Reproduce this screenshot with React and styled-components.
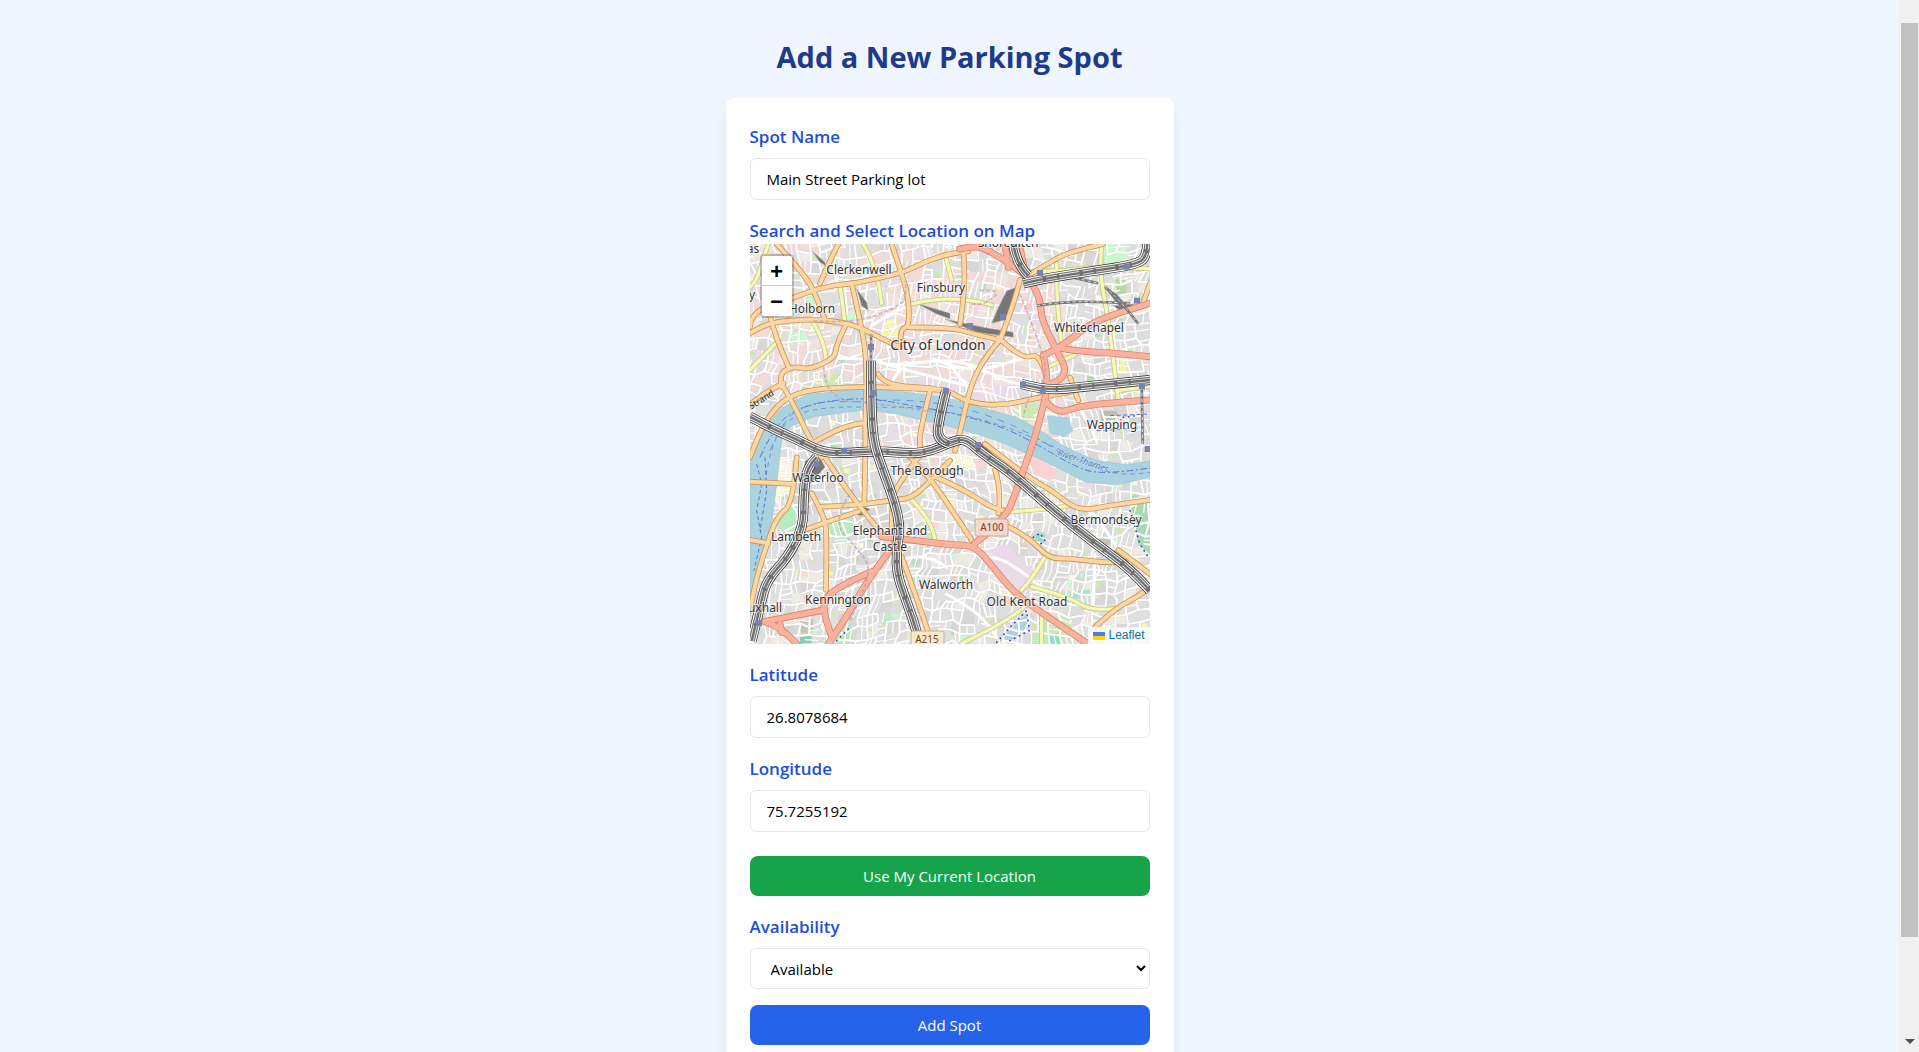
import React, { useState } from "react";
import styled, { createGlobalStyle } from "styled-components";

const UI_FONT = '"Open Sans", "Noto Sans", sans-serif';
const MAP_FONT = '"Noto Sans", "Open Sans", sans-serif';

const GlobalStyle = createGlobalStyle`
  *, *::before, *::after { box-sizing: border-box; }
  body {
    margin: 0;
    overflow: hidden;
    background: #eff6ff;
    font-family: ${UI_FONT};
    font-size: 15px;
    line-height: 24px;
    color: #000;
  }
`;

const Shell = styled.div`
  display: flex;
  height: 100vh;
`;

const Page = styled.main`
  flex: 1;
  min-width: 0;
  overflow: hidden;
  display: flex;
  flex-direction: column;
  align-items: center;
  padding: 38px 16px 0;
`;

const Title = styled.h1`
  margin: 0 0 22px;
  font-size: 29px;
  line-height: 38px;
  font-weight: 700;
  color: #1e3a8a;
`;

const Card = styled.form`
  width: 100%;
  max-width: 448px;
  flex-shrink: 0;
  padding: 24px;
  display: flex;
  flex-direction: column;
  gap: 16px;
  background: #fff;
  border-radius: 8px;
  box-shadow: 0 10px 15px -3px rgba(0, 0, 0, 0.1), 0 4px 6px -4px rgba(0, 0, 0, 0.1);
`;

const Field = styled.div`
  display: flex;
  flex-direction: column;
  gap: ${(p) => (p.$tight ? "0" : "8px")};
`;

const Label = styled.label`
  padding-top: 2px;
  font-size: 17px;
  line-height: 26px;
  font-weight: 600;
  color: #1d4ed8;
`;

const TextInput = styled.input`
  width: 100%;
  height: 42px;
  padding: 8px 16px;
  border: 1px solid #e5e7eb;
  border-radius: 6px;
  background: #fff;
  font: inherit;
  color: #000;
  outline: none;
`;

const Select = styled.select`
  width: 100%;
  height: 41px;
  padding: 8px 16px;
  border: 1px solid #e5e7eb;
  border-radius: 6px;
  background: #fff;
  font: inherit;
  color: #000;
`;

const Button = styled.button`
  width: 100%;
  height: 40px;
  margin-top: ${(p) => (p.$spaced ? "8px" : "0")};
  border: 0;
  border-radius: 8px;
  background: ${(p) => p.$color};
  color: #fff;
  font: inherit;
  cursor: pointer;
`;

/* ---------- scroll bar ---------- */

const ScrollTrack = styled.div`
  width: 20px;
  padding: 23px 1px 8px 2px;
  display: flex;
  flex-direction: column;
  justify-content: space-between;
  align-items: center;
  background: #f0f0f0;
`;

const ScrollThumb = styled.div`
  width: 100%;
  height: 89.5%;
  background: #c1c1c1;
`;

const ScrollArrow = styled.div`
  border-left: 5px solid transparent;
  border-right: 5px solid transparent;
  border-top: 5px solid #505050;
`;

/* ---------- map ---------- */

const MapBox = styled.div`
  position: relative;
  width: 100%;
  height: 400px;
  overflow: hidden;
  background: #ddd;
`;

const MapDrawing = styled.svg`
  display: block;
  width: 100%;
  height: 100%;
`;

const ZoomBar = styled.div`
  position: absolute;
  top: 10px;
  left: 10px;
  display: flex;
  flex-direction: column;
  border: 2px solid rgba(0, 0, 0, 0.2);
  border-radius: 4px;
  background-clip: padding-box;
`;

const ZoomButton = styled.button`
  width: 30px;
  height: 30px;
  padding: 5px 0 0;
  border: 0;
  border-bottom: ${(p) => (p.$first ? "1px solid #ccc" : "0")};
  border-radius: ${(p) => (p.$first ? "2px 2px 0 0" : "0 0 2px 2px")};
  background: #fff;
  color: #000;
  font: bold 22px/25px "Liberation Mono", monospace;
  cursor: pointer;
`;

const Attribution = styled.div`
  position: absolute;
  right: 0;
  bottom: 0;
  padding: 0 5px;
  background: rgba(255, 255, 255, 0.8);
  font: 12px/17px "Liberation Sans", sans-serif;
`;

const AttributionLink = styled.a`
  display: flex;
  align-items: center;
  gap: 3px;
  color: #0078a8;
  text-decoration: none;
`;

/* Line work lives in a 1200 x 1200 space, three units to a map pixel. */
function randomSource(seed) {
  let s = seed;
  return () => {
    s = (s * 1664525 + 1013904223) % 4294967296;
    return s / 4294967296;
  };
}

function buildStreets() {
  const rnd = randomSource(77);
  const step = 33;
  const n = Math.ceil(1200 / step) + 3;
  const pts = [];
  for (let j = 0; j < n; j++) {
    pts.push([]);
    for (let i = 0; i < n; i++) {
      const x = (i - 1) * step;
      const y = (j - 1) * step;
      pts[j].push([
        Math.round(x + 26 * Math.sin(y / 130 + x / 400) + (rnd() - 0.5) * 18),
        Math.round(y + 26 * Math.sin(x / 150 + 1) + (rnd() - 0.5) * 18),
      ]);
    }
  }
  let streets = "";
  let alleys = "";
  const cells = [];
  const center = ["#f2dad9", "#f2dad9", "#ebdbe8", "#e0dfdf", "#f2dad9", "#f0e4de"];
  const outer = ["#dddddd", "#dddddd", "#e0dfdf", "#e0dfdf", "#d9d6d6", "#eeeae4"];
  const accents = ["#cdebb0", "#c8facc", "#ffffe5", "#fbf6b0", "#f2dad9", "#aee0a8", "#ffd6d1", "#cdebb0"];
  for (let j = 0; j < n - 1; j++) {
    for (let i = 0; i < n - 1; i++) {
      const a = pts[j][i];
      const b = pts[j][i + 1];
      const c = pts[j + 1][i + 1];
      const d = pts[j + 1][i];
      const inCity = a[0] > 330 && a[0] < 920 && a[1] > 60 && a[1] < 640;
      const northWest = a[0] < 500 && a[1] < 450;
      const list = inCity || (northWest && rnd() < 0.6) ? center : outer;
      cells.push([`${a} ${b} ${c} ${d}`, list[Math.floor(rnd() * list.length)]]);
      if (rnd() < 0.32) {
        const w = 9 + rnd() * 18;
        const h = 8 + rnd() * 15;
        cells.push([
          `${a[0] + 4},${a[1] + 4} ${a[0] + w},${a[1] + 7} ${a[0] + w - 3},${a[1] + h} ${a[0] + 2},${a[1] + h - 2}`,
          accents[Math.floor(rnd() * accents.length)],
        ]);
      }
      if (rnd() < 0.74) streets += `M${a}L${b}`;
      if (rnd() < 0.74) streets += `M${a}L${d}`;
      if (rnd() < 0.32) {
        alleys += `M${(a[0] + b[0]) >> 1},${(a[1] + b[1]) >> 1}L${(c[0] + d[0]) >> 1},${(c[1] + d[1]) >> 1}`;
      } else if (rnd() < 0.25) {
        alleys += `M${(a[0] + d[0]) >> 1},${(a[1] + d[1]) >> 1}L${(c[0] + b[0]) >> 1},${(c[1] + b[1]) >> 1}`;
      }
    }
  }
  return { streets, alleys, cells };
}

const TOWN = buildStreets();

/* Rounds a list of points into a path with curved corners. */
function curve(points) {
  const p = points.split(" ").map((s) => s.split(",").map(Number));
  if (p.length < 3) return `M${p[0]}L${p[1]}`;
  let d = `M${p[0]}`;
  for (let i = 1; i < p.length - 1; i++) {
    const last = i === p.length - 2;
    const end = last ? p[i + 1] : [(p[i][0] + p[i + 1][0]) / 2, (p[i][1] + p[i + 1][1]) / 2];
    d += `Q${p[i]} ${end}`;
  }
  return d;
}

const RIVER =
  "M0,640L25,588L60,530L100,490L170,452L320,436L430,440L590,462L690,490L800,520L880,565L930,600L980,625L1040,650L1130,662L1200,650V700L1100,723L1010,715L930,675L880,650L800,615L740,590L680,570L590,545L430,508L340,498L190,518L120,548L95,588L80,720L58,890L12,1050L0,1080Z";

const PARKS = [
  ["110,270 165,255 175,290 120,305", "#c8facc"],
  ["160,155 195,150 195,195 165,200", "#c8facc"],
  ["220,395 275,388 278,420 225,425", "#cdebb0"],
  ["235,830 300,820 315,860 290,890 240,880", "#b5ecc0"],
  ["85,830 125,785 155,800 150,860 90,860", "#b5ecc0"],
  ["60,640 125,640 125,740 95,760 85,790 70,760", "#fdfbdc"],
  ["405,230 440,222 445,280 400,275", "#fbf6a0"],
  ["1060,0 1130,0 1130,55 1065,60", "#c8facc"],
  ["800,490 860,475 870,520 830,535 795,525", "#cdebb0"],
  ["815,170 848,168 850,198 815,200", "#ffc9c4"],
  ["1095,105 1125,100 1130,150 1100,150", "#b5d9a0"],
  ["1110,340 1130,340 1130,390 1110,390", "#f5f3a8"],
  ["1140,780 1200,770 1200,930 1165,900", "#a8d9b0"],
  ["150,1130 190,1125 190,1165 155,1170", "#c8c5ae"],
  ["150,1180 185,1175 185,1200 150,1200", "#83cfae"],
  ["270,1160 300,1140 315,1170 285,1200 255,1200", "#b5ecb0"],
  ["395,1115 420,1105 430,1135 400,1145", "#b5f0c8"],
  ["740,1195 830,1110 840,1150 790,1185", "#aad3df"],
  ["850,1140 950,1110 965,1150 940,1200 850,1200", "#c4ecb4"],
  ["900,1170 930,1165 930,1200 900,1200", "#8fe3bb"],
  ["855,870 885,868 882,900 860,898", "#9fd9c8"],
  ["1030,880 1090,875 1095,905 1040,900", "#c8c5b0"],
  ["960,1045 1020,1035 1020,1055 965,1065", "#9fe8c8"],
  ["585,640 660,630 680,670 620,690", "#fdfbd0"],
  ["1050,500 1100,500 1105,525 1055,530", "#bcbcab"],
  ["980,70 1010,65 1015,100 985,105", "#d9edc0"],
  ["620,90 650,88 650,110 620,110", "#a8f0c0"],
];

/* Large sites that no minor street runs through. */
const BLOCKS = [
  ["740,905 765,900 865,1000 850,1028 815,1045 705,945", "#ebdbe8"],
  ["832,625 870,618 925,690 900,712 850,690", "#f9d3d3"],
  ["890,515 955,520 970,560 945,578 900,570", "#aad3df"],
  ["1000,700 1030,705 1035,735 1000,735", "#ebdbe8"],
];

const ROADS = {
  yellow: [
    "270,128 280,190 285,238",
    "340,0 385,78 395,178",
    "185,228 225,290 228,348",
    "475,183 600,148 725,183",
    "55,0 35,60 20,110 0,130",
    "0,378 85,290",
    "920,58 918,178 935,300",
    "1055,0 1048,88 1075,218 1105,468",
    "830,82 925,83 1055,66 1200,75",
    "895,368 975,333",
    "1100,440 1200,428",
    "585,30 605,108",
    "485,768 555,838 555,900",
    "755,803 855,803 965,783",
    "885,938 845,1008 815,1038",
    "845,1028 955,1058 1025,1103 1105,1093",
    "635,1198 785,1128 835,1078",
    "875,1108 875,1200",
  ],
  orange: [
    "80,0 165,93 200,158 225,228",
    "265,0 235,58 210,118",
    "125,163 215,128 315,118 455,88 525,53 600,28 655,22",
    "0,268 45,238 135,228 205,226 305,240 355,263 415,293 450,310",
    "60,215 75,278 115,368",
    "305,118 330,228 347,318 350,438 345,538 347,620 343,778",
    "0,250 0,190 120,165",
    "95,428 85,388 135,366 175,378 255,343 260,298 285,248",
    "0,483 45,443 100,418",
    "0,640 25,575 55,518 105,463 185,435 345,428 405,430 585,438",
    "100,428 135,488 180,588 215,640",
    "425,0 455,88 475,158 478,248 450,255 452,300",
    "475,250 600,250 665,268 750,288",
    "385,390 400,425 585,433 650,475 755,486 875,458 965,443",
    "540,440 520,520 505,600 515,628",
    "750,288 705,338 660,428 630,568 615,620",
    "810,108 790,188 750,288",
    "640,23 650,118 630,240",
    "845,88 925,38 985,18 1060,0",
    "745,280 815,348 870,325 890,400",
    "960,400 985,470",
    "1200,118 1180,175",
    "0,713 130,720",
    "0,888 55,898",
    "140,640 130,778 80,818 45,918 15,1018 0,1100",
    "165,858 245,828 325,803",
    "215,788 335,783 425,768 485,763 545,708 600,650",
    "185,748 225,818 230,888 228,1038",
    "225,640 315,778 405,878",
    "185,600 285,538 345,538",
    "515,628 445,718 425,768 425,868",
    "455,938 535,1158 545,1200",
    "470,628 545,708 600,790 665,888",
    "560,700 645,738 735,798 765,800",
    "735,678 755,738 745,808",
    "705,600 845,708 905,738 965,788 1015,798 1085,783 1200,768",
    "775,848 835,878 895,943 955,943 1085,958 1125,953",
    "1200,1030 1165,1058 1095,1093 1035,1150",
    "1105,918 1200,990",
  ],
  red: [
    "630,15 675,5 715,18 825,88 870,158 875,228 915,308 962,405 885,425",
    "765,0 775,70",
    "808,0 825,85",
    "880,335 935,308 1015,243 1085,213 1200,178",
    "925,312 985,323 1105,328 1200,338",
    "880,333 895,408 885,468 855,580 830,650 800,738 765,828 675,898",
    "885,468 915,510 985,488 1065,478 1200,468",
    "395,878 485,888 600,903 665,903 705,938 775,1028 845,1088 1015,1200",
    "435,900 365,988 285,1128 235,1200",
    "365,983 295,1013 225,1058 220,1108 245,1178",
    "45,1133 115,1118 222,1098",
    "45,1133 95,1148 140,1200",
    "90,1140 95,1165",
  ],
};

const ROAD_LOOKS = {
  yellow: { edge: "#c5c98a", fill: "#f5f8b6", width: 15 },
  orange: { edge: "#c9964f", fill: "#fcd6a4", width: 17 },
  red: { edge: "#e0806a", fill: "#f9b29c", width: 21 },
};

const MAIN_STREETS = [
  "265,343 355,343 440,370 590,410 650,425",
  "430,365 600,340 700,380 790,350 870,330",
  "600,360 640,420 660,430",
  "550,345 625,375 690,370 790,425 860,420",
  "450,380 405,425 455,430",
  "590,1050 640,1080 700,1120 740,1180",
  "720,940 770,940 880,1035",
  "980,480 1020,540 1040,590",
  "1015,790 1080,870 1130,960",
  "365,245 440,195 470,190",
  "440,950 530,920 590,970",
  "1035,930 1030,1080",
];

const RAILS = [
  "0,518 75,558 145,588 215,625 285,628 385,620 485,630 545,620 600,595 645,583 695,628 785,688 915,803 1035,898 1145,978 1200,1040",
  "200,640 170,668 160,758 160,848 115,938 50,1008 30,1088 5,1190",
  "363,350 363,438 368,588 395,668 435,778 450,848 440,918 440,988 475,1088 500,1158 508,1200",
  "588,440 568,520 560,590 600,600",
  "815,420 885,440 1005,428 1200,408",
  "820,118 875,105 1035,80 1155,62 1190,40 1192,0",
  "790,0 800,63 835,95",
];

const YARDS = [
  "770,140 800,130 790,175 775,225 725,238 745,190",
  "185,20 220,50 235,70 210,55",
  "320,135 350,175 355,200 335,185",
  "500,178 600,208 600,225 560,210",
  "585,225 700,250 790,265 790,280 680,265",
  "310,810 345,790 360,795 335,815",
  "655,590 700,600 760,665 720,665",
  "165,650 210,640 225,670 180,720 160,740",
  "1060,125 1100,150 1130,185 1110,190",
  "1090,185 1150,180 1165,200 1110,200",
];

const SIDINGS = [
  "860,185 920,175 1045,172 1140,178",
  "925,90 1045,118",
  "1065,128 1120,178 1165,240",
  "1175,410 1178,600",
  "363,270 363,350",
];
const TUBES = [
  "190,230 310,240 455,185 470,150 465,110",
  "222,370 222,465 400,480 590,510",
  "310,735 240,830 330,920 370,990 300,1130",
  "665,180 700,185 760,135 690,140",
  "810,150 870,300 895,400 830,460 820,520",
];
const STATIONS = [
  [363, 309], [370, 447], [588, 441], [200, 660], [282, 621], [870, 87], [1131, 68], [1161, 170],
  [759, 219], [660, 246], [819, 422], [878, 440], [1176, 426], [684, 603], [1193, 615], [27, 1137],
];

const PLACES = [
  ["Clerkenwell", 109, 30, 12],
  ["Finsbury", 191, 48, 12],
  ["Holborn", 62, 69, 12],
  ["City of London", 188, 106, 14],
  ["Whitechapel", 339, 88, 12],
  ["Wapping", 362, 185, 12],
  ["Waterloo", 68, 238, 12],
  ["The Borough", 177, 231, 12],
  ["Elephant and", 140, 291, 12],
  ["Castle", 140, 307, 12],
  ["Lambeth", 46, 297, 12],
  ["Kennington", 88, 360, 12],
  ["uxhall", 15, 368, 12],
  ["Walworth", 196, 345, 12],
  ["Old Kent Road", 277, 362, 12],
  ["Bermondsey", 356, 280, 12],
  ["Shoreditch", 258, 3, 12],
  ["as", 3, 9, 12],
  ["y", 2, 55, 12],
];

const PlaceName = styled.text`
  font-family: ${MAP_FONT};
  font-size: ${(p) => p.$size}px;
  text-anchor: middle;
  fill: #333;
  stroke: rgba(255, 255, 255, 0.6);
  stroke-width: 2px;
  stroke-linejoin: round;
  paint-order: stroke;
`;

const StreetName = styled.text`
  font-family: ${MAP_FONT};
  font-size: 9px;
  text-anchor: middle;
  fill: #222;
`;

const WaterName = styled.text`
  font-family: ${MAP_FONT};
  font-size: 9px;
  font-style: italic;
  fill: #4f78bd;
  stroke: #cfe3ea;
  stroke-width: 1px;
  paint-order: stroke;
`;

const ShieldText = styled.text`
  font-family: ${MAP_FONT};
  font-size: 10px;
  text-anchor: middle;
  fill: ${(p) => p.$color};
`;

function Roads({ kind }) {
  const look = ROAD_LOOKS[kind];
  return (
    <g fill="none" strokeLinecap="round" strokeLinejoin="round">
      {ROADS[kind].map((r) => (
        <path key={r} d={curve(r)} stroke={look.edge} strokeWidth={look.width} />
      ))}
      {ROADS[kind].map((r) => (
        <path key={r} d={curve(r)} stroke={look.fill} strokeWidth={look.width - 5} />
      ))}
    </g>
  );
}

function Rail({ points }) {
  const d = curve(points);
  return (
    <>
      <path d={d} stroke="#222" strokeWidth="30" />
      <path d={d} stroke="#fff" strokeWidth="26" />
      <path d={d} stroke="#6f6f6f" strokeWidth="19" />
      <path d={d} stroke="#e6e6e6" strokeWidth="12" strokeDasharray="60 10 34 6" />
      <path d={d} stroke="#6f6f6f" strokeWidth="7" />
    </>
  );
}

function LondonMap() {
  return (
    <MapDrawing viewBox="0 0 400 400" preserveAspectRatio="xMidYMid slice" role="img" aria-label="Map of London">
      <g transform="scale(0.33333)">
        {TOWN.cells.map(([points, fill], i) => (
          <polygon key={i} points={points} fill={fill} />
        ))}
        {PARKS.map(([points, fill]) => (
          <polygon key={points} points={points} fill={fill} />
        ))}
        <g fill="none" stroke="#cbc7c7" strokeLinecap="round">
          <path d={TOWN.streets} strokeWidth="7" />
          <path d={TOWN.alleys} strokeWidth="4" />
        </g>
        <g fill="none" stroke="#fff" strokeLinecap="round">
          <path d={TOWN.streets} strokeWidth="6" />
          <path d={TOWN.alleys} strokeWidth="4" />
        </g>
        {BLOCKS.map(([points, fill]) => (
          <polygon key={points} points={points} fill={fill} />
        ))}
        <g fill="none" stroke="#fff" strokeLinecap="round" strokeWidth="9">
          {MAIN_STREETS.map((s) => (
            <path key={s} d={curve(s)} />
          ))}
        </g>
        {YARDS.map((points) => (
          <polygon key={points} points={points} fill="#777" stroke="#bbb" strokeDasharray="4 3" strokeWidth="3" />
        ))}
        <path d={RIVER} fill="#aad3df" stroke="#9cc5d3" strokeWidth="2" />
        <g fill="none" stroke="#5b6fe0" strokeWidth="3">
          <path d={curve("30,640 80,530 180,478 340,460 460,480 600,505 750,545 860,600 960,660 1050,695 1200,672")} strokeDasharray="20 8 6 8" />
          <path d={curve("45,720 60,600 130,510 240,488 400,490 520,490 700,525 850,580 980,640 1100,700 1200,685")} strokeDasharray="14 12" strokeWidth="2" />
          <path d={curve("60,620 100,520 200,470 330,475 450,465 620,485 760,530 880,590 950,640")} strokeDasharray="22 18" strokeWidth="2" />
          <path d="M20,660L35,720L20,800L35,880L12,980M45,640L50,740L30,860M1080,515L1200,510M1040,560L1130,555" strokeDasharray="12 8" />
        </g>
        <g fill="none" stroke="#2b3fe0" strokeWidth="5" strokeLinecap="round" strokeDasharray="1 15">
          <path d="M740,1195L785,1145L830,1100L838,1160L780,1190M1145,780L1195,770M1140,800L1170,900L1195,940" />
          <path d="M850,880L870,868L885,890L865,905M1120,520L1160,515M260,1190L300,1150" />
        </g>
        <Roads kind="yellow" />
        <Roads kind="orange" />
        <Roads kind="red" />
        <g fill="none">
          {SIDINGS.map((s) => (
            <React.Fragment key={s}>
              <path d={curve(s)} stroke="#777" strokeWidth="8" />
              <path d={curve(s)} stroke="#ddd" strokeWidth="3" strokeDasharray="10 8" />
            </React.Fragment>
          ))}
          {TUBES.map((s) => (
            <path key={s} d={curve(s)} stroke="#b89ab5" strokeWidth="5" strokeOpacity="0.65" strokeDasharray="12 6" />
          ))}
          {RAILS.map((r) => (
            <Rail key={r} points={r} />
          ))}
        </g>
        {STATIONS.map(([x, y]) => (
          <rect key={`${x}-${y}`} x={x - 9} y={y - 9} width="18" height="18" fill="#7a81b3" />
        ))}
      </g>
      <rect x="225" y="275" width="33" height="17" rx="2" fill="#f6d8cc" stroke="#c9a394" />
      <ShieldText x="242" y="287" $color="#7a3a2c">A100</ShieldText>
      <rect x="161" y="387" width="33" height="17" rx="2" fill="#faeacb" stroke="#cbb28b" />
      <ShieldText x="177" y="399" $color="#6b4a1c">A215</ShieldText>
      <StreetName transform="translate(13 158) rotate(-33)">Strand</StreetName>
      <WaterName transform="translate(307 211) rotate(19)">River-Thames</WaterName>
      {PLACES.map(([name, x, y, size]) => (
        <PlaceName key={name} x={x} y={y} $size={size}>
          {name}
        </PlaceName>
      ))}
    </MapDrawing>
  );
}

function LocationMap() {
  return (
    <MapBox>
      <LondonMap />
      <ZoomBar>
        <ZoomButton type="button" $first aria-label="Zoom in">+</ZoomButton>
        <ZoomButton type="button" aria-label="Zoom out">−</ZoomButton>
      </ZoomBar>
      <Attribution>
        <AttributionLink href="#leaflet">
          <svg width="12" height="8" viewBox="0 0 12 8" aria-hidden="true">
            <path fill="#4c7be1" d="M0 0h12v4H0z" />
            <path fill="#ffd500" d="M0 4h12v4H0z" />
          </svg>
          Leaflet
        </AttributionLink>
      </Attribution>
    </MapBox>
  );
}

export default function App() {
  const [spot, setSpot] = useState({
    name: "Main Street Parking lot",
    latitude: "26.8078684",
    longitude: "75.7255192",
    availability: "available",
  });
  const update = (key) => (e) => setSpot({ ...spot, [key]: e.target.value });

  return (
    <>
      <GlobalStyle />
      <Shell>
        <Page>
          <Title>Add a New Parking Spot</Title>
          <Card onSubmit={(e) => e.preventDefault()}>
            <Field>
              <Label htmlFor="name">Spot Name</Label>
              <TextInput id="name" type="text" value={spot.name} onChange={update("name")} />
            </Field>
            <Field $tight role="group" aria-labelledby="map-label">
              <Label as="span" id="map-label">Search and Select Location on Map</Label>
              <LocationMap />
            </Field>
            <Field>
              <Label htmlFor="latitude">Latitude</Label>
              <TextInput id="latitude" type="text" value={spot.latitude} onChange={update("latitude")} />
            </Field>
            <Field>
              <Label htmlFor="longitude">Longitude</Label>
              <TextInput id="longitude" type="text" value={spot.longitude} onChange={update("longitude")} />
            </Field>
            <Button type="button" $color="#16a34a" $spaced>Use My Current Location</Button>
            <Field>
              <Label htmlFor="availability">Availability</Label>
              <Select id="availability" value={spot.availability} onChange={update("availability")}>
                <option value="available">Available</option>
                <option value="unavailable">Unavailable</option>
              </Select>
            </Field>
            <Button type="submit" $color="#2563eb">Add Spot</Button>
          </Card>
        </Page>
        <ScrollTrack aria-hidden="true">
          <ScrollThumb />
          <ScrollArrow />
        </ScrollTrack>
      </Shell>
    </>
  );
}
